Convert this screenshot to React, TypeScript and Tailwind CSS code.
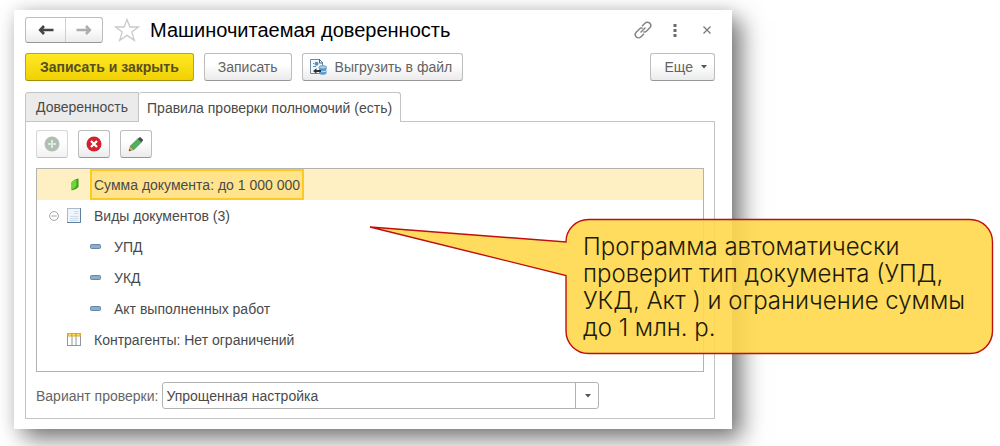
import type { ButtonHTMLAttributes, ReactNode } from 'react'
import clsx from 'clsx'

interface PushButtonProps extends ButtonHTMLAttributes<HTMLButtonElement> {
  primary?: boolean
  children: ReactNode
}

const PushButton = ({ primary = false, className, children, ...rest }: PushButtonProps) => (
  <button
    type="button"
    className={clsx(
      'flex h-7 items-center justify-center rounded-[3px] border text-sm disabled:opacity-60',
      primary
        ? 'border-[#c2a500] border-b-[#a58d00] bg-linear-to-b from-[#ffe923] to-[#f0d000] font-bold text-[#574f1c]'
        : 'border-[#bdbdbd] border-b-[#979797] bg-linear-to-b from-white from-40% to-[#ebebeb] text-[#636363]',
      className
    )}
    {...rest}
  >
    {children}
  </button>
)

const ArrowIcon = ({ flipped = false }: { flipped?: boolean }) => (
  <svg width="16" height="12" viewBox="0 0 16 12" className={clsx(flipped && 'rotate-180')} aria-hidden="true">
    <path d="M6 2 2.2 6 6 10M2.5 6H15.5" fill="none" stroke="currentColor" strokeWidth="2.6" />
  </svg>
)

const StarIcon = () => (
  <svg width="26" height="24" viewBox="0 0 26 24" aria-hidden="true">
    <path
      d="M13 1.6 15.9 9H24.4L17.8 14.1 20.4 22.4 13 17.4 5.6 22.4 8.2 14.1 1.6 9H10.1Z"
      fill="none"
      stroke="#c9c9c9"
      strokeWidth="1.3"
    />
  </svg>
)

const LinkIcon = () => (
  <svg width="18" height="18" viewBox="0 0 18 18" fill="none" stroke="#858585" strokeWidth="1.5" aria-hidden="true">
    <path d="M8 5.2 11 2.2a3.3 3.3 0 0 1 4.8 4.6l-3.2 3.2a3.2 3.2 0 0 1-3.2.8" />
    <path d="M10 12.8 7 15.8a3.3 3.3 0 0 1-4.8-4.6L5.4 8a3.2 3.2 0 0 1 3.2-.8" />
    <path d="M6.5 11.5l5-5" />
  </svg>
)

const ExportIcon = () => (
  <svg width="18" height="18" viewBox="0 0 18 18" aria-hidden="true">
    <path d="M1.5 1.5h9l3 3v11h-12z" fill="#f4f8fb" stroke="#6f8ba3" />
    <path d="M10.5 1v4H14" fill="none" stroke="#4f6678" />
    <circle cx="7.5" cy="5.8" r="2" fill="#4b93cb" />
    <path d="M4 8.5h3M4 5.5h1" stroke="#4b93cb" />
    <path d="M10 9.5v5.5c0 2.4 7.5 2.4 7.5 0V9.5z" fill="#5b9bd0" />
    <ellipse cx="13.8" cy="9.3" rx="3.8" ry="1.7" fill="#a8cfee" stroke="#4384b8" strokeWidth=".7" />
    <path d="M10 12.2c0 2 7.5 2 7.5 0" fill="none" stroke="#d6e9f7" />
    <path d="M4 13l3.5-2.8v1.9H12v1.8H7.5v1.9z" fill="#2c3338" />
  </svg>
)

const AddIcon = () => (
  <svg width="16" height="16" viewBox="0 0 16 16" aria-hidden="true">
    <circle cx="8" cy="8" r="7.5" fill="#7b967e" />
    <path d="M8 4v8M4 8h8" stroke="#c9d6c9" strokeWidth="2" />
  </svg>
)

const DeleteIcon = () => (
  <svg width="16" height="16" viewBox="0 0 16 16" aria-hidden="true">
    <circle cx="8" cy="8" r="7.5" fill="#d3222f" />
    <path d="M5 5l6 6M11 5l-6 6" stroke="#fff" strokeWidth="2.2" />
  </svg>
)

const PencilIcon = () => (
  <svg width="16" height="16" viewBox="0 0 16 16" aria-hidden="true">
    <path d="M1 15 2.4 10 6 13.6Z" fill="#e9b44c" stroke="#8a6a35" strokeWidth=".5" />
    <path d="M1 15l.6-2 1.4 1.4z" fill="#333" />
    <path d="M2.4 10 9.8 2.8l3.5 3.5L6 13.6Z" fill="#4bb35e" stroke="#2c7a3c" strokeWidth=".6" />
    <path d="M9.8 2.8 11.3 1.4Q12 .8 12.7 1.4L14.8 3.4Q15.4 4.1 14.8 4.8L13.3 6.3Z" fill="#4a4a4a" />
  </svg>
)

const LeafIcon = () => (
  <svg width="8" height="13" viewBox="0 0 8 13" aria-hidden="true">
    <path d="M.5 4.5Q3 1 7.5 .5V9Q5 12 .5 12.5Z" fill="#3a9c1a" />
    <path d="M.5 4.5Q3 1.500 5.500 1.500V8Q4 10.500 .5 11.500Z" fill="#6fd636" />
  </svg>
)

const DocIcon = () => (
  <svg width="14" height="15" viewBox="0 0 14 15" aria-hidden="true">
    <rect x=".5" y=".5" width="13" height="14" fill="#eef4f9" stroke="#a9bac8" />
    <path d="M13.5 0v14.5H0" fill="none" stroke="#5f7f9b" />
    <path d="M7 3.5h4.5M7 5.5h4.5" stroke="#d3dbe2" />
    <path d="M3 8.5h8.5M3 10.5h8.5M3 12.5h8.5" stroke="#ccdce9" />
  </svg>
)

const TableIcon = () => (
  <svg width="14" height="13" viewBox="0 0 14 13" aria-hidden="true">
    <rect x=".5" y=".5" width="13" height="12" fill="#fff" stroke="#8d979f" />
    <path d="M5 3v9.5M9 3v9.5" stroke="#8d979f" />
    <path d="M0 0h14v3.5H0z" fill="#dba928" />
    <path d="M1.5 1h2.5v1.5h-2.5zM5.5 1H8v1.5H5.5zM10 1h2.5v1.5H10z" fill="#ffe26b" />
  </svg>
)

const DashIcon = () => (
  <svg width="11" height="5" viewBox="0 0 11 5" aria-hidden="true">
    <rect x=".5" y=".5" width="10" height="4" rx="1" fill="#8facca" stroke="#6685a8" />
  </svg>
)

const CollapseIcon = () => (
  <svg width="10" height="10" viewBox="0 0 10 10" fill="none" stroke="#a3a3a3" aria-hidden="true">
    <circle cx="5" cy="5" r="4.4" />
    <path d="M2.5 5h5" />
  </svg>
)

const Caret = () => (
  <svg width="6" height="4" viewBox="0 0 6 4" aria-hidden="true">
    <path d="M0 0h6L3 3.6z" fill="#555" />
  </svg>
)

const documentKinds = ['УПД', 'УКД', 'Акт выполненных работ']

const RulesTree = () => (
  <ul className="border border-[#b3b3b3] pb-4 text-sm text-[#4a4a4a]">
    <li className="flex h-[31px] items-center bg-[#fff0c4]">
      <span className="flex w-[53px] justify-end pr-[11px]">
        <LeafIcon />
      </span>
      <span className="flex h-full items-center border-2 border-[#ffca1f] bg-[#ffe48d] px-0.5">
        Сумма документа: до 1 000 000
      </span>
    </li>
    <li>
      <div className="flex h-[31px] items-center">
        <button type="button" aria-label="Свернуть" className="ml-3 mr-2">
          <CollapseIcon />
        </button>
        <DocIcon />
        <span className="ml-[13px]">Виды документов (3)</span>
      </div>
      <ul>
        {documentKinds.map((kind) => (
          <li key={kind} className="flex h-[31px] items-center gap-[13px] pl-[53px]">
            <DashIcon />
            {kind}
          </li>
        ))}
      </ul>
    </li>
    <li className="flex h-[31px] items-center gap-[13px] pl-[30px]">
      <TableIcon />
      Контрагенты: Нет ограничений
    </li>
  </ul>
)

const Callout = () => (
  <aside className="absolute left-[369px] top-[218px] w-[625px] pl-[214px] pr-5 pt-[15px]">
    <svg className="absolute left-0 top-0" width="625" height="137" viewBox="0 0 625 137" aria-hidden="true">
      <path
        d="M219.5 1.5H601A22.5 22.5 0 0 1 623.5 24V113A22.5 22.5 0 0 1 601 135.5H219.5A22.5 22.5 0 0 1 197 113V57.5L1 9 197 24A22.5 22.5 0 0 1 219.5 1.5Z"
        fill="#ffd84c"
        fillOpacity=".9"
        stroke="#c00d0d"
        strokeWidth="1.4"
      />
    </svg>
    <p className="relative font-[Inter,sans-serif] text-2xl font-light leading-[27px] text-[#1c1a08]">
      Программа автоматически
      <br />
      проверит тип документа (УПД,
      <br />
      УКД, Акт ) и ограничение суммы
      <br />
      до 1 млн. р.
    </p>
  </aside>
)

const App = () => (
  <div className="relative overflow-hidden bg-white pb-[17px] pl-[14px] pr-[268px] pt-[10px] font-['Liberation_Sans',Arial,sans-serif]">
    <main className="bg-white pb-[10px] pl-[11px] pr-[17px] pt-[7px] shadow-[10px_10px_22px_rgba(0,0,0,0.5),0_0_16px_rgba(0,0,0,0.12)]">
      <header className="flex h-[26px] items-center">
        <div className="flex h-[26px] rounded-[3px] border border-[#bdbdbd] border-b-[#979797] bg-linear-to-b from-white from-40% to-[#ebebeb]">
          <button type="button" aria-label="Назад" className="flex w-[39px] items-center justify-center text-[#444]">
            <ArrowIcon />
          </button>
          <button
            type="button"
            aria-label="Вперед"
            className="flex w-[37px] items-center justify-center border-l border-[#cfcfcf] text-[#adadad]"
          >
            <ArrowIcon flipped />
          </button>
        </div>
        <button type="button" aria-label="В избранное" className="ml-[11px]">
          <StarIcon />
        </button>
        <h1 className="ml-[10px] text-xl text-black">Машиночитаемая доверенность</h1>
        <div className="ml-auto flex items-center pr-1 text-[#6b6b6b]">
          <button type="button" aria-label="Ссылка">
            <LinkIcon />
          </button>
          <button type="button" aria-label="Меню" className="ml-[21px]">
            <svg width="4" height="13" viewBox="0 0 4 13" fill="#6b6b6b" aria-hidden="true">
              <path d="M.5 0h3v3h-3zM.5 5h3v3h-3zM.5 10h3v3h-3z" />
            </svg>
          </button>
          <button type="button" aria-label="Закрыть" className="ml-[26px]">
            <svg width="8" height="8" viewBox="0 0 8 8" stroke="#777" strokeWidth="1.2" aria-hidden="true">
              <path d="M.5.5l7 7M7.5.5l-7 7" />
            </svg>
          </button>
        </div>
      </header>

      <div className="mt-[10px] flex gap-[10px]">
        <PushButton primary className="px-[14px]">
          Записать и закрыть
        </PushButton>
        <PushButton className="px-[13px]">Записать</PushButton>
        <PushButton className="gap-2 pl-1.5 pr-[10px]">
          <ExportIcon />
          Выгрузить в файл
        </PushButton>
        <PushButton className="ml-auto gap-2 pl-[14px] pr-[7px]">
          Еще
          <Caret />
        </PushButton>
      </div>

      <div role="tablist" className="mt-[11px] flex h-[30px] text-sm text-[#4a4a4a]">
        <button
          type="button"
          role="tab"
          aria-selected="false"
          className="rounded-tl-[3px] border border-[#c4c4c4] bg-[#ebebeb] px-[10px]"
        >
          Доверенность
        </button>
        <button
          type="button"
          role="tab"
          aria-selected="true"
          className="relative rounded-t-[3px] border border-b-0 border-l-0 border-[#c4c4c4] bg-white px-2"
        >
          Правила проверки полномочий (есть)
        </button>
      </div>

      <section role="tabpanel" className="-mt-px border border-[#c4c4c4] px-[10px] pb-[9px] pt-2">
        <div className="flex gap-[10px]">
          <PushButton className="w-8" aria-label="Добавить" disabled>
            <AddIcon />
          </PushButton>
          <PushButton className="w-8" aria-label="Удалить">
            <DeleteIcon />
          </PushButton>
          <PushButton className="w-8" aria-label="Изменить">
            <PencilIcon />
          </PushButton>
        </div>

        <div className="mt-[10px]">
          <RulesTree />
        </div>

        <div className="mt-[10px] flex items-center text-sm text-[#666]">
          <label htmlFor="check-mode">Вариант проверки:</label>
          <div className="relative ml-1 w-[437px]">
            <select
              id="check-mode"
              className="block h-[27px] w-full appearance-none rounded-[3px] border border-[#b3b3b3] bg-white pl-[3px] pr-7 text-[#4a4a4a]"
            >
              <option>Упрощенная настройка</option>
            </select>
            <span className="pointer-events-none absolute inset-y-0 right-0 flex w-6 items-center justify-center border-l border-[#b3b3b3]">
              <Caret />
            </span>
          </div>
        </div>
      </section>
    </main>
    <Callout />
  </div>
)

export default App
